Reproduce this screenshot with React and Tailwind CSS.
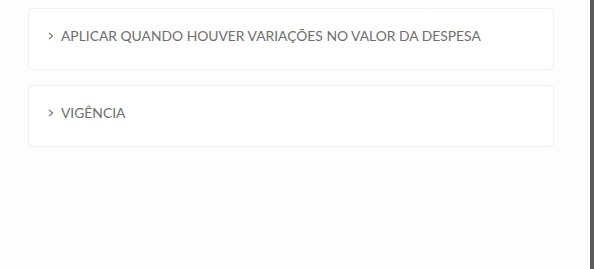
import React from 'react';

const Chevron = () => (
  <svg width="6" height="8" viewBox="0 0 6 8" className="shrink-0" fill="none">
    <path d="M1 0.8 L4.6 4 L1 7.2" stroke="#6e6e6e" strokeWidth="1.1" />
  </svg>
);

const Section = ({ title }) => (
  <div className="flex h-[62px] items-start rounded border border-[#eef0f4] bg-white pl-[19px] pt-[18px]">
    <button className="flex items-center gap-[7px] text-[13.85px] leading-[18px] text-[#6e6e6e]">
      <Chevron />
      <span>{title}</span>
    </button>
  </div>
);

export default function App() {
  return (
    <div
      className="flex h-[269px] w-[594px] bg-[#fdfdfd]"
      style={{ fontFamily: 'Lato, "Noto Sans", sans-serif' }}
    >
      <div className="flex flex-1 flex-col gap-[15px] pl-[28px] pr-[36px] pt-[8px]">
        <Section title="APLICAR QUANDO HOUVER VARIAÇÕES NO VALOR DA DESPESA" />
        <Section title="VIGÊNCIA" />
      </div>
      <div className="w-[4px] bg-[#5a5a5a]" />
    </div>
  );
}
